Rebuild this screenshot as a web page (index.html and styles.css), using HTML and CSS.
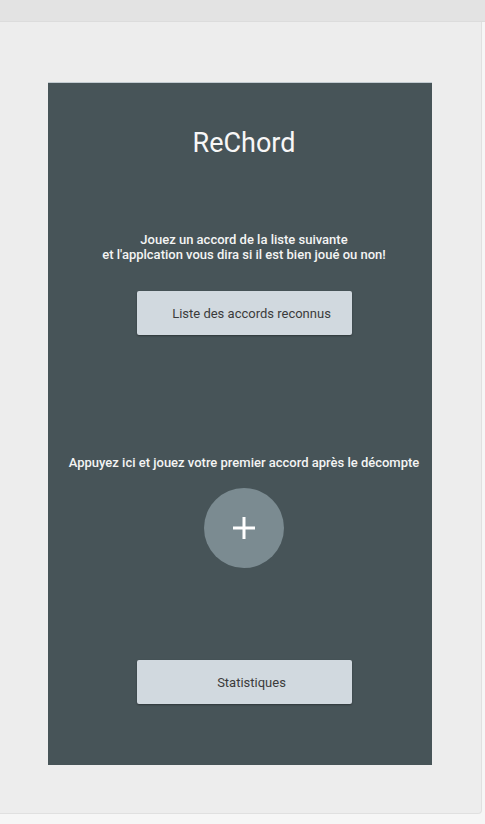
FILE: index.html
```html
<!DOCTYPE html>
<html lang="fr">
<head>
<meta charset="utf-8">
<title>ReChord</title>
<link rel="stylesheet" href="styles.css">
</head>
<body>
<div class="topbar"></div>
<div class="frame">
  <main class="panel">
    <h1 class="title">ReChord</h1>
    <p class="intro">Jouez un accord de la liste suivante<br>et l'applcation vous dira si il est bien joué ou non!</p>
    <button class="btn btn-list">Liste des accords reconnus</button>
    <p class="hint">Appuyez ici et jouez votre premier accord après le décompte</p>
    <button class="fab" aria-label="Démarrer">
      <svg width="24" height="24" viewBox="0 0 24 24"><path d="M12 1v22M1 12h22" stroke="#fff" stroke-width="3" fill="none"/></svg>
    </button>
    <button class="btn btn-stats">Statistiques</button>
  </main>
</div>
</body>
</html>
```
FILE: styles.css
```css
html, body {
  margin: 0;
  padding: 0;
  background: #f6f6f6;
  font-family: Roboto, "Liberation Sans", sans-serif;
}
.topbar {
  height: 21px;
  background: #e3e3e3;
  border-bottom: 1px solid #dcdcdc;
}
.frame {
  width: 482px;
  height: 792px;
  background: #ededed;
  border-right: 1px solid #e0e0e0;
  border-bottom: 1px solid #e0e0e0;
  border-bottom-right-radius: 4px;
  padding-top: 60px;
  box-sizing: border-box;
}
.panel {
  margin-left: 48px;
  width: 384px;
  height: 683px;
  background: #475458;
  border-top: 1px solid #c3ccd1;
  box-sizing: border-box;
  display: flex;
  flex-direction: column;
  align-items: center;
  padding-top: 44px;
  padding-left: 8px;
}
.title {
  margin: 0;
  font-size: 27px;
  line-height: 32px;
  font-weight: 400;
  color: #f7f7f7;
}
.intro {
  margin: 73px 0 0;
  font-size: 13px;
  line-height: 15px;
  font-weight: 500;
  color: #f4f4f4;
  text-align: center;
}
.btn {
  width: 215px;
  height: 44px;
  border: none;
  border-radius: 2px;
  background: #d1d9df;
  color: #3b3b3b;
  font-family: Roboto, "Liberation Sans", sans-serif;
  font-size: 13px;
  padding: 0 0 0 15px;
  box-shadow: 0 1px 2px rgba(0, 0, 0, 0.35);
}
.btn-list {
  margin-top: 29px;
}
.hint {
  margin: 120px 0 0;
  font-size: 13px;
  line-height: 15px;
  font-weight: 500;
  color: #f4f4f4;
  text-align: center;
}
.fab {
  margin-top: 18px;
  width: 80px;
  height: 80px;
  border-radius: 50%;
  border: none;
  background: #7b8b91;
  display: flex;
  align-items: center;
  justify-content: center;
  padding: 0;
}
.btn-stats {
  margin-top: 92px;
}
```
